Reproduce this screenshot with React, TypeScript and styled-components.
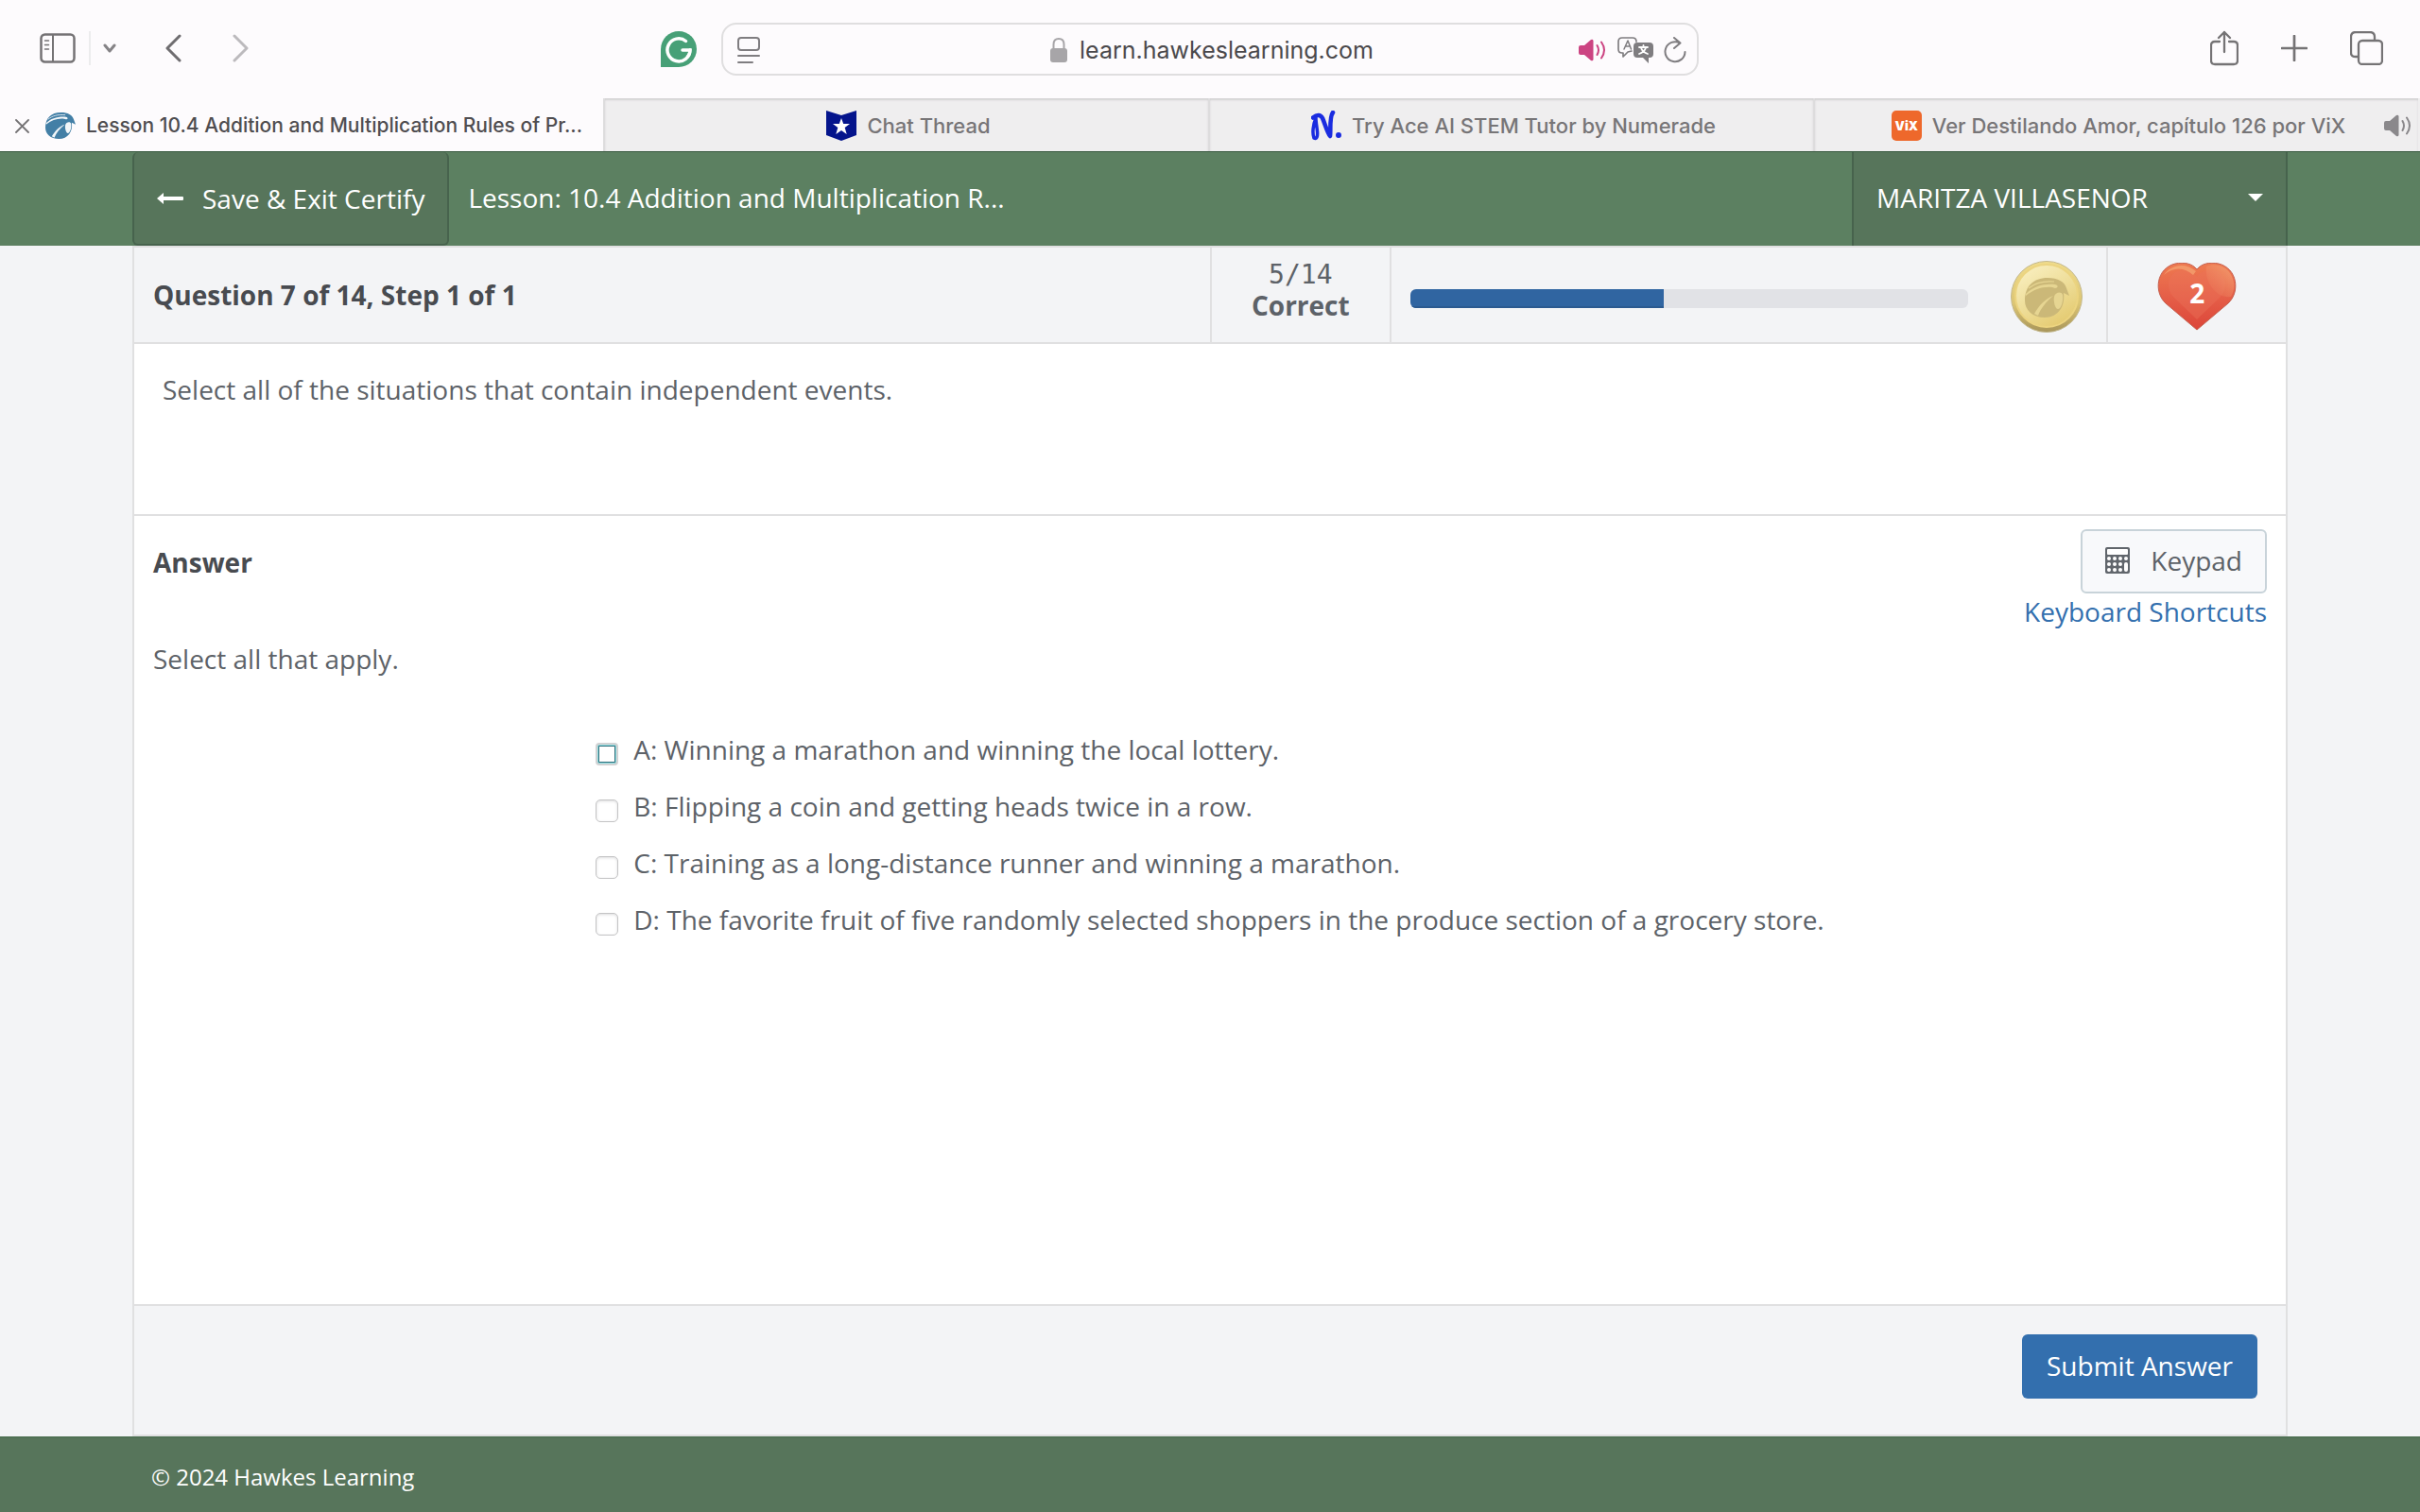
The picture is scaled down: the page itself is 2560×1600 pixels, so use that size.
import React, { useState } from "react";
import styled, { createGlobalStyle } from "styled-components";

const ui = `Inter, "Liberation Sans", sans-serif`;
const body = `"Open Sans", "Noto Sans", sans-serif`;
const line = "#e0e0e1";

const GlobalStyle = createGlobalStyle`
  *, *::before, *::after { box-sizing: border-box; }
  body { margin: 0; background: #f3f4f6; }
  button, input { font: inherit; color: inherit; }
  button { border: 0; padding: 0; background: none; cursor: pointer; }
  h1, h2, p, ul { margin: 0; padding: 0; font: inherit; }
  svg { display: block; flex: none; }
`;

const Page = styled.div`
  display: flex;
  flex-direction: column;
  min-height: 100vh;
  font: 400 28px/40px ${body};
  color: #5d6268;
`;

/* ---------- browser chrome ---------- */

const Toolbar = styled.div`
  display: grid;
  grid-template-columns: minmax(0, 1fr) minmax(0, 1034px) minmax(0, 1fr);
  align-items: center;
  height: 104px;
  background: #fdfbfd;
  color: #757375;
  font-family: ${ui};
`;

const ToolGroup = styled.div<{ $end?: boolean }>`
  display: flex;
  align-items: center;
  justify-content: space-between;
  padding: ${(p) => (p.$end ? "0 39px 2px 0" : "0 26px 0 42px")};
  ${(p) => p.$end && "justify-content: flex-end; gap: 45px;"}
`;

const ToolSet = styled.div`
  display: flex;
  align-items: center;
  padding-bottom: 2px;
`;

const ToolButton = styled.button<{ $gap?: number }>`
  display: flex;
  align-items: center;
  margin-left: ${(p) => p.$gap ?? 0}px;
`;

const ToolDivider = styled.span`
  width: 2px;
  height: 36px;
  margin-left: 14px;
  background: #ececed;
`;

const AddressBar = styled.div`
  display: grid;
  grid-template-columns: 1fr auto 1fr;
  align-items: center;
  height: 56px;
  padding: 2px 11px 0 15px;
  border: 2px solid #dfdedf;
  border-radius: 16px;
`;

const AddressText = styled.label`
  display: flex;
  align-items: center;
  gap: 13px;
`;

const AddressInput = styled.input`
  field-sizing: content;
  border: 0;
  padding: 0;
  background: none;
  outline: none;
  font-size: 25px;
  line-height: 32px;
  color: #4b494c;
`;

const AddressTools = styled.div`
  display: flex;
  align-items: center;
  justify-content: flex-end;
  gap: 11px;
`;

const TabStrip = styled.nav`
  display: grid;
  grid-template-columns: repeat(4, minmax(0, 1fr));
  height: 56px;
  background: #efeeef;
  font: 500 22px/28px ${ui};
  color: #777577;
`;

const Tab = styled.div<{ $active?: boolean }>`
  display: grid;
  grid-template-columns: minmax(0, 1fr) auto minmax(0, 1fr);
  align-items: center;
  padding: 2px 6px 0 10px;
  border-right: 2px solid #dddcdd;
  box-shadow: inset 0 2px 2px #d3d2d3;
  &:last-child { border-color: transparent; }
  ${(p) =>
    p.$active &&
    `display: flex; gap: 17px; padding: 2px 16px 0; box-shadow: none; background: #fdfbfd; color: #4f4d50; font-size: 21px;`}
`;

const TabLink = styled.a`
  grid-column: 2;
  display: flex;
  align-items: center;
  gap: 11px;
  min-width: 0;
  color: inherit;
  text-decoration: none;
  white-space: nowrap;
`;

const TabSound = styled.button`
  grid-column: 3;
  justify-self: end;
`;

const VixBadge = styled.span`
  display: flex;
  align-items: center;
  justify-content: center;
  width: 32px;
  height: 32px;
  border-radius: 5px;
  background: #ee682b;
  color: #fff;
  font: 900 13px/16px ${ui};
`;

/* ---------- lesson header ---------- */

const Header = styled.header`
  height: 100px;
  border-top: 1px solid #38593f;
  background: #5c8061;
  color: #fff;
`;

const Container = styled.div`
  display: flex;
  width: 100%;
  max-width: 2280px;
  margin: 0 auto;
`;

const HeaderRow = styled(Container)`
  height: 100%;
`;

const ExitButton = styled.button`
  display: flex;
  align-items: center;
  gap: 20px;
  padding: 0 24px;
  border: 2px solid #47634d;
  border-top: 0;
  border-radius: 6px;
  background: #57755b;
`;

const LessonTitle = styled.h1`
  flex: 1;
  align-self: center;
  padding: 0 20px 3px;
`;

const UserMenu = styled.button`
  display: flex;
  align-items: center;
  justify-content: space-between;
  width: 461px;
  padding: 0 24px 3px;
  border: solid #47634d;
  border-width: 0 2px;
  background: #57755b;
`;

/* ---------- question panel ---------- */

const Panel = styled.main`
  flex: 1;
  display: flex;
  flex-direction: column;
  width: 100%;
  max-width: 2280px;
  margin: 0 auto;
  border: 2px solid ${line};
  background: #fff;
`;

const StatusRow = styled.div`
  display: grid;
  grid-template-columns: minmax(0, 6fr) minmax(0, 1fr) minmax(0, 4fr) minmax(0, 1fr);
  height: 102px;
  border-bottom: 2px solid ${line};
  background: #f3f4f6;
`;

const StatusCell = styled.div`
  display: flex;
  align-items: center;
  justify-content: center;
  padding-top: 4px;
  border-left: 2px solid ${line};
`;

const QuestionTitle = styled.h2`
  align-self: center;
  padding-left: 20px;
  font-weight: 700;
  color: #484b50;
`;

const ScoreCell = styled(StatusCell)`
  flex-direction: column;
  justify-content: flex-start;
  padding-top: 13px;
  line-height: 32px;
`;

const Score = styled.span`
  font-family: "DejaVu Sans Mono", monospace;
`;

const ScoreLabel = styled.strong`
  font-weight: 700;
`;

const ProgressCell = styled(StatusCell)`
  gap: 45px;
  padding-right: 25px;
  padding-left: 20px;
`;

const Track = styled.div`
  flex: 1;
  height: 20px;
  margin-top: 4px;
  border-radius: 6px;
  overflow: hidden;
  background: #e1e2e6;
`;

const Fill = styled.div`
  height: 100%;
  background: #3065a1;
  box-shadow: inset 0 -2px 0 #2b5a90;
`;

const Hearts = styled.div`
  display: grid;
  place-items: center;
  > * { grid-area: 1 / 1; }
`;

const HeartCount = styled.span`
  padding-bottom: 8px;
  font-weight: 700;
  color: #fff;
`;

const Prompt = styled.section`
  min-height: 182px;
  padding: 28px 30px;
  border-bottom: 2px solid ${line};
`;

const AnswerArea = styled.section`
  flex: 1;
  padding: 14px 20px;
`;

const AnswerHead = styled.div`
  display: flex;
  justify-content: space-between;
`;

const AnswerTitle = styled(QuestionTitle)`
  align-self: flex-start;
  padding: 15px 0 0;
`;

const AnswerTools = styled.div`
  display: flex;
  flex-direction: column;
  align-items: flex-end;
`;

const KeypadButton = styled.button`
  display: flex;
  align-items: center;
  gap: 22px;
  height: 68px;
  padding: 0 24px 2px;
  border: 2px solid #c8d3d9;
  border-radius: 6px;
  background: #f8f9fb;
`;

const ShortcutLink = styled.a`
  line-height: 38px;
  color: #336fae;
  text-decoration: none;
`;

const Hint = styled.p`
  margin-top: 11px;
`;

const Options = styled.ul`
  width: fit-content;
  margin: 46px auto 0;
  list-style: none;
`;

const Option = styled.label`
  display: flex;
  gap: 16px;
  padding: 10px 0;
`;

const Tick = styled.input`
  appearance: none;
  flex: none;
  width: 24px;
  height: 24px;
  margin: 13px 0 0;
  border: 1px solid #c4c4c5;
  border-radius: 5px;
  background: #fff;
  box-shadow: inset 0 1px 3px #dcdcdd;
  outline: none;
  &[data-current="true"] {
    border: 2px solid #d2d2d3;
    border-radius: 4px;
    box-shadow: inset 0 0 0 1px #8edfe2, inset 0 0 0 2px #2f6b78;
  }
  &:checked { background: #336fae; }
`;

const SubmitRow = styled.div`
  display: flex;
  justify-content: flex-end;
  height: 138px;
  padding: 30px;
  border-top: 2px solid ${line};
  background: #f3f4f6;
`;

const SubmitButton = styled.button`
  height: 68px;
  padding: 0 26px 2px;
  border-radius: 6px;
  background: #336fae;
  color: #fff;
`;

const Footer = styled.footer`
  display: flex;
  align-items: center;
  height: 80px;
  padding-top: 4px;
  border-top: 2px solid #4f7154;
  background: #57755b;
  color: #fff;
  font-size: 24px;
`;

const Copyright = styled(Container)`
  padding-left: 20px;
`;

/* ---------- drawings ---------- */

const Sound = ({ color }: { color: string }) => (
  <svg width="30" height="24" viewBox="0 0 30 24" fill="none">
    <path d="M0 9q0-2 2-2h4l7-6q2-1 2.500 1v20q-.5 2-2.500 1l-7-6H2q-2 0-2-2z" fill={color} />
    <path d="M19.500 7q3 5 0 10M24 3.500q6 8.500 0 17" stroke={color} strokeWidth="2" strokeLinecap="round" />
  </svg>
);

const HawkShape = ({ fill, cut }: { fill: string; cut: string }) => (
  <>
    <path d="M0 24C0 9 9 0 24 0c11 0 18 4 20 11l3 8-6-3c2 14-6 26-20 26C8 42 0 34 0 24z" fill={fill} />
    <path d="M1 17C9 9 20 6 32 7c4 1 3 4 0 4l-3-1C19 9 10 12 1 19z" fill={cut} />
    <path d="M4 11C11 5 19 3 31 4" fill="none" stroke={cut} strokeWidth="1.200" />
    <path d="M30 19C22 22 15 29 10 38l4 2c3-8 8-14 16-21z" fill={cut} />
    <path d="M31 20c1-5 8-6 9-2 1 7-2 15-5 15s-5-8-4-13z" fill={cut} />
  </>
);

const HawkIcon = () => (
  <svg width="32" height="28" viewBox="0 0 47 42" preserveAspectRatio="none">
    <HawkShape fill="#437fa6" cut="#f2f6f9" />
  </svg>
);

const Coin = () => (
  <svg width="76" height="76" viewBox="0 0 76 76" role="img" aria-label="Coin">
    <defs>
      <linearGradient id="rim" x1="0" y1="0" x2="0" y2="1">
        <stop offset="0" stopColor="#f0dc8c" />
        <stop offset=".6" stopColor="#dcc573" />
        <stop offset="1" stopColor="#a8955a" />
      </linearGradient>
      <linearGradient id="face" x1=".2" y1="0" x2=".8" y2="1">
        <stop offset="0" stopColor="#f9efc0" />
        <stop offset=".5" stopColor="#eedd98" />
        <stop offset="1" stopColor="#e3c86c" />
      </linearGradient>
    </defs>
    <circle cx="38" cy="38" r="37.500" fill="url(#rim)" stroke="#c3b88e" />
    <circle cx="38" cy="37" r="33" fill="url(#face)" stroke="#ecd480" strokeWidth="2" />
    <g transform="translate(15 18)">
      <HawkShape fill="#cbb878" cut="#e6d592" />
    </g>
  </svg>
);

const Heart = () => (
  <svg width="84" height="72" viewBox="0 0 84 72">
    <defs>
      <linearGradient id="heart" x1="0" y1="0" x2="0" y2="1">
        <stop offset="0" stopColor="#ee7a50" />
        <stop offset=".5" stopColor="#e55f48" />
        <stop offset="1" stopColor="#dc4539" />
      </linearGradient>
      <linearGradient id="gloss" x1="0" y1="1" x2="1" y2="0">
        <stop offset="0" stopColor="#ef8a63" stopOpacity="0" />
        <stop offset="1" stopColor="#f5ab7c" />
      </linearGradient>
    </defs>
    <path d="M42 71L9 43C-4 31-1 6 19 1c10-2 18 0 23 6C47 1 55-1 65 1c20 5 23 30 10 42z" fill="url(#heart)" stroke="#c4604f" />
    <path d="M42 60L19 38c-10-9-9-24 2-29 9-3 17 0 21 6 4-6 12-9 21-6 11 5 12 20 2 29z" fill="#ec7459" opacity=".4" />
    <path d="M52 4c8-4 20-1 25 7 6 9 5 18 1 25C62 38 50 20 52 4z" fill="url(#gloss)" opacity=".7" />
    <path d="M7 13C14 2 30-1 41 9l-3 4C29 5 18 4 7 13z" fill="#f5a673" opacity=".7" />
  </svg>
);

const SidebarIcon = () => (
  <svg width="38" height="32" viewBox="0 0 38 32" fill="none" stroke="currentColor">
    <rect x="1.500" y="1.500" width="35" height="29" rx="4" strokeWidth="2.500" />
    <path d="M14 2v28" strokeWidth="2" />
    <path d="M5.500 8h4M5.500 12.500h4M5.500 17h4" strokeWidth="1.500" strokeLinecap="round" />
  </svg>
);

const Chevron = ({ d, w, h, color }: { d: string; w: number; h: number; color: string }) => (
  <svg width={w} height={h} viewBox={`0 0 ${w} ${h}`} fill="none" stroke={color} strokeWidth="3" strokeLinecap="round" strokeLinejoin="round">
    <path d={d} />
  </svg>
);

const Grammarly = () => (
  <svg width="38" height="38" viewBox="0 0 38 38" fill="none">
    <path d="M0 38V19a19 19 0 1 1 19 19z" fill="#47a077" />
    <path d="M26.500 10.500A12 12 0 1 0 31 20h-8" stroke="#fff" strokeWidth="3.500" strokeLinecap="round" />
    <path d="M31 19.500c0 4-1 6-3 8" stroke="#fff" strokeWidth="3" strokeLinecap="round" />
  </svg>
);

const ReaderIcon = () => (
  <svg width="24" height="28" viewBox="0 0 24 28" fill="none" stroke="#7f7d80" strokeWidth="2" strokeLinecap="round">
    <rect x="1" y="1" width="22" height="13" rx="3" />
    <path d="M1 20h22M1 27h15" />
  </svg>
);

const LockIcon = () => (
  <svg width="18" height="26" viewBox="0 0 18 26" fill="none">
    <rect y="11" width="18" height="15" rx="3" fill="#a7a5a8" />
    <path d="M3.500 12V7q0-6 5.500-6t5.500 6v5" stroke="#a7a5a8" strokeWidth="2" />
  </svg>
);

const TranslateIcon = () => (
  <svg width="38" height="28" viewBox="0 0 38 28" fill="none" strokeLinecap="round" strokeLinejoin="round">
    <path d="M15 15l-4 1-5 5v-4H5q-4 0-4-4V5q0-4 4-4h11q4 0 4 4" stroke="#7f7d80" strokeWidth="1.700" />
    <path d="M7 13l4-9 3.500 9M8.500 10h5" stroke="#7f7d80" strokeWidth="1.500" />
    <path d="M21 6h13q4 0 4 4v8q0 4-4 4h-1v6l-6-6h-6q-4 0-4-4v-8q0-4 4-4z" fill="#7f7d80" />
    <path d="M23 11h9M27.500 9v2M25 11.500q1 4 7 6.500M30 11.500q-1 4-7 6.500" stroke="#fff" strokeWidth="1.800" />
  </svg>
);

const ReloadIcon = () => (
  <svg width="24" height="28" viewBox="0 0 24 28" fill="none" stroke="#7f7d80" strokeWidth="2" strokeLinecap="round" strokeLinejoin="round">
    <path d="M17 6.500A10.500 10.500 0 1 0 22.500 16M11 1l6.500 5.500L11 12" />
  </svg>
);

const ShareIcon = () => (
  <svg width="30" height="38" viewBox="0 0 30 38" fill="none" stroke="currentColor" strokeWidth="2.300" strokeLinecap="round" strokeLinejoin="round">
    <path d="M10 12H5q-4 0-4 4v16q0 4 4 4h20q4 0 4-4V16q0-4-4-4h-5M15 23V2M9 8l6-6 6 6" />
  </svg>
);

const PlusIcon = () => (
  <svg width="28" height="28" viewBox="0 0 28 28" stroke="currentColor" strokeWidth="2.700" strokeLinecap="round">
    <path d="M14 1v26M1 14h26" />
  </svg>
);

const WindowsIcon = () => (
  <svg width="35" height="36" viewBox="0 0 35 36" fill="none" stroke="currentColor" strokeWidth="2.300">
    <rect x="9" y="10" width="25" height="25" rx="4" />
    <path d="M9 27H6q-5 0-5-4V6q0-5 5-5h15q5 0 5 5v4" />
  </svg>
);

const ShieldIcon = () => (
  <svg width="32" height="32" viewBox="0 0 32 32">
    <path d="M0 0l16 5L32 0v26l-16 6-16-6z" fill="#04148c" />
    <path d="M16 8l2.200 6H25l-5.300 4 2 7L16 21l-5.700 4 2-7L7 14h6.800z" fill="#fff" />
  </svg>
);

const NumeradeIcon = () => (
  <svg width="32" height="32" viewBox="0 0 32 32" fill="none" stroke="#1a2ce0" strokeLinecap="round" strokeLinejoin="round">
    <path d="M2 7.500C6 4 10 4 12 8c3 7 5 15 8 19 1-5-1-20 3-25" strokeWidth="4.500" />
    <path d="M5 8C2 15 1 24 3 29c3 2 4-2 3.500-7C6 17 5 12 5 8z" strokeWidth="3.500" />
    <circle cx="29" cy="26" r="1.500" fill="#1a2ce0" strokeWidth="3" />
  </svg>
);

const ArrowIcon = () => (
  <svg width="28" height="12" viewBox="0 0 28 12" fill="#fff">
    <path d="M0 6l7-6v4h20q1 0 1 1v2q0 1-1 1H7v4z" />
  </svg>
);

const CalculatorIcon = () => (
  <svg width="26" height="28" viewBox="0 0 26 28">
    <rect width="26" height="28" rx="2" fill="#61666c" />
    <g fill="#fff">
      <rect x="2" y="2" width="22" height="6" rx="1" />
      {[12, 18, 24].map((y) => [4, 10, 16].map((x) => <circle key={`${x}-${y}`} cx={x} cy={y} r="2" />))}
      <circle cx="22" cy="12" r="2" />
      <rect x="20" y="16" width="4" height="10" rx="2" />
    </g>
  </svg>
);

/* ---------- page ---------- */

const options = [
  { id: "A", text: "Winning a marathon and winning the local lottery." },
  { id: "B", text: "Flipping a coin and getting heads twice in a row." },
  { id: "C", text: "Training as a long-distance runner and winning a marathon." },
  { id: "D", text: "The favorite fruit of five randomly selected shoppers in the produce section of a grocery store." },
];

export default function App() {
  const [address, setAddress] = useState("learn.hawkeslearning.com");
  const progress = 5 / 11;

  return (
    <Page>
      <GlobalStyle />
      <Toolbar>
        <ToolGroup>
          <ToolSet>
            <ToolButton aria-label="Sidebar"><SidebarIcon /></ToolButton>
            <ToolDivider />
            <ToolButton aria-label="Tab groups" $gap={13}>
              <Chevron d="M2 2l5 6 5-6" w={14} h={10} color="#858386" />
            </ToolButton>
            <ToolButton aria-label="Back" $gap={52}>
              <Chevron d="M15 2L2 15l13 13" w={17} h={30} color="#6f6d70" />
            </ToolButton>
            <ToolButton aria-label="Forward" $gap={54}>
              <Chevron d="M2 2l13 13L2 28" w={17} h={30} color="#bcbabd" />
            </ToolButton>
          </ToolSet>
          <ToolButton aria-label="Grammarly"><Grammarly /></ToolButton>
        </ToolGroup>
        <AddressBar>
          <ToolButton aria-label="Page menu"><ReaderIcon /></ToolButton>
          <AddressText>
            <LockIcon />
            <AddressInput aria-label="Address" value={address} onChange={(e) => setAddress(e.target.value)} />
          </AddressText>
          <AddressTools>
            <ToolButton aria-label="Mute"><Sound color="#cc4482" /></ToolButton>
            <ToolButton aria-label="Translate"><TranslateIcon /></ToolButton>
            <ToolButton aria-label="Reload"><ReloadIcon /></ToolButton>
          </AddressTools>
        </AddressBar>
        <ToolGroup $end>
          <ToolButton aria-label="Share"><ShareIcon /></ToolButton>
          <ToolButton aria-label="New tab"><PlusIcon /></ToolButton>
          <ToolButton aria-label="Tab overview"><WindowsIcon /></ToolButton>
        </ToolGroup>
      </Toolbar>

      <TabStrip>
        <Tab $active>
          <button aria-label="Close tab">
            <svg width="15" height="15" viewBox="0 0 15 15" stroke="#757375" strokeWidth="1.800" strokeLinecap="round">
              <path d="M1 1l13 13M14 1L1 14" />
            </svg>
          </button>
          <TabLink href="#lesson">
            <HawkIcon />
            Lesson 10.4 Addition and Multiplication Rules of Pr...
          </TabLink>
        </Tab>
        <Tab>
          <TabLink href="#chat"><ShieldIcon />Chat Thread</TabLink>
        </Tab>
        <Tab>
          <TabLink href="#numerade"><NumeradeIcon />Try Ace AI STEM Tutor by Numerade</TabLink>
        </Tab>
        <Tab>
          <TabLink href="#vix"><VixBadge>ViX</VixBadge>Ver Destilando Amor, capítulo 126 por ViX</TabLink>
          <TabSound aria-label="Mute tab"><Sound color="#8a888b" /></TabSound>
        </Tab>
      </TabStrip>

      <Header>
        <HeaderRow>
          <ExitButton><ArrowIcon />Save &amp; Exit Certify</ExitButton>
          <LessonTitle>Lesson: 10.4 Addition and Multiplication R...</LessonTitle>
          <UserMenu aria-haspopup="menu">
            MARITZA VILLASENOR
            <svg width="16" height="8" viewBox="0 0 16 8" fill="#fff"><path d="M0 0h16L8 8z" /></svg>
          </UserMenu>
        </HeaderRow>
      </Header>

      <Panel>
        <StatusRow>
          <QuestionTitle>Question 7 of 14, Step 1 of 1</QuestionTitle>
          <ScoreCell>
            <Score>5/14</Score>
            <ScoreLabel>Correct</ScoreLabel>
          </ScoreCell>
          <ProgressCell>
            <Track role="progressbar" aria-valuenow={Math.round(progress * 100)}>
              <Fill style={{ width: `${progress * 100}%` }} />
            </Track>
            <Coin />
          </ProgressCell>
          <StatusCell>
            <Hearts>
              <Heart />
              <HeartCount>2</HeartCount>
            </Hearts>
          </StatusCell>
        </StatusRow>

        <Prompt>Select all of the situations that contain independent events.</Prompt>

        <AnswerArea>
          <AnswerHead>
            <AnswerTitle>Answer</AnswerTitle>
            <AnswerTools>
              <KeypadButton><CalculatorIcon />Keypad</KeypadButton>
              <ShortcutLink href="#shortcuts">Keyboard Shortcuts</ShortcutLink>
            </AnswerTools>
          </AnswerHead>
          <Hint>Select all that apply.</Hint>
          <Options>
            {options.map((o, i) => (
              <li key={o.id}>
                <Option>
                  <Tick type="checkbox" name="answer" value={o.id} data-current={i === 0} />
                  {o.id}: {o.text}
                </Option>
              </li>
            ))}
          </Options>
        </AnswerArea>

        <SubmitRow>
          <SubmitButton>Submit Answer</SubmitButton>
        </SubmitRow>
      </Panel>

      <Footer>
        <Copyright>© 2024 Hawkes Learning</Copyright>
      </Footer>
    </Page>
  );
}
